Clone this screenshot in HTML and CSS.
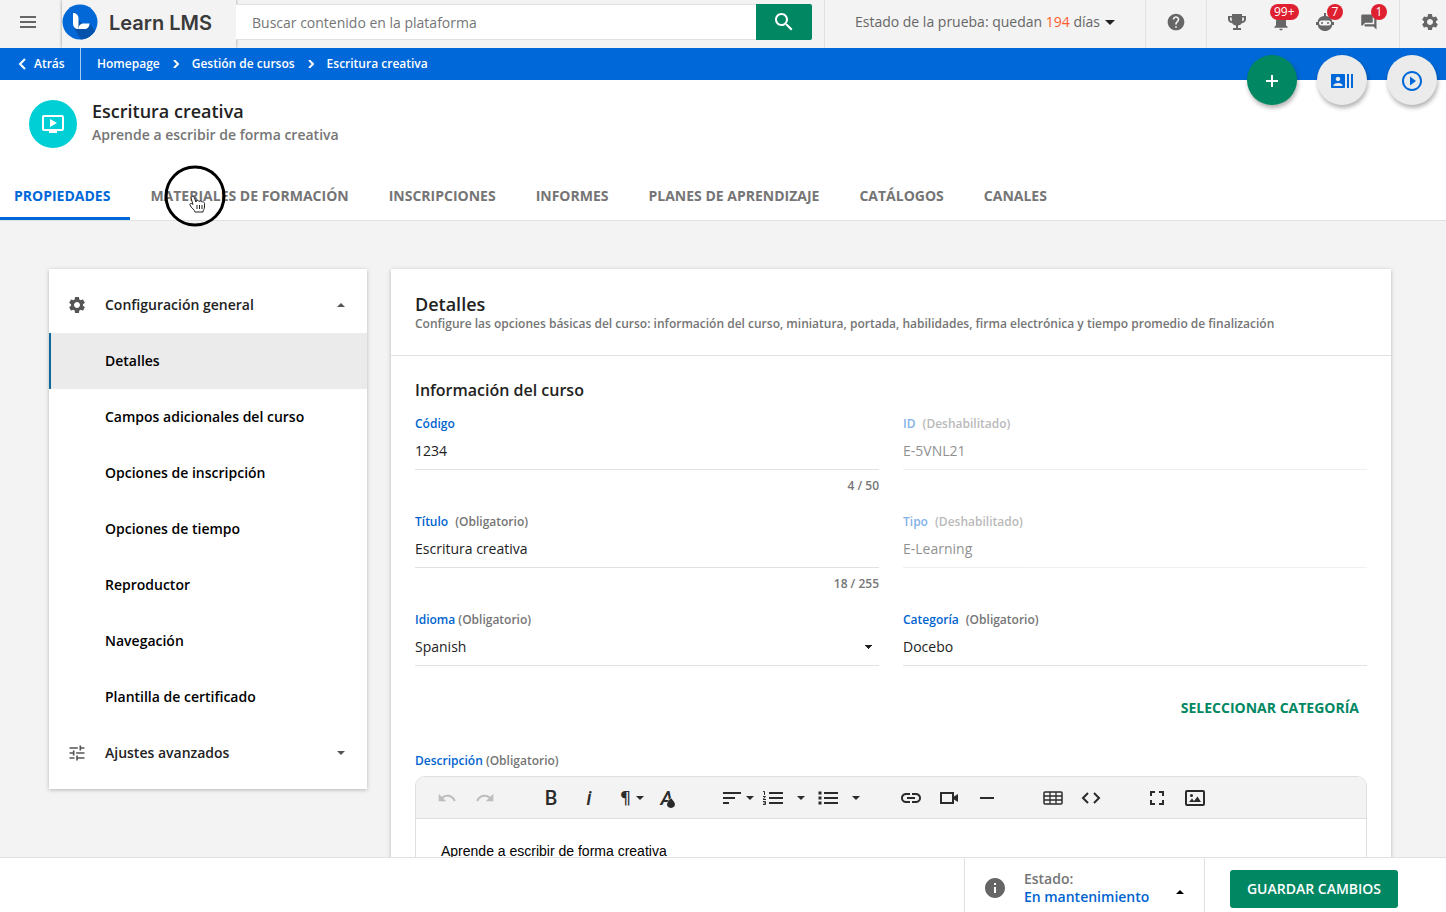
FILE: index.html
```html
<!DOCTYPE html>
<html lang="es">
<head>
  <meta charset="UTF-8">
  <meta name="viewport" content="width=device-width, initial-scale=1.0">
  <title>Escritura creativa - Learn LMS</title>
  <link rel="stylesheet" href="styles.css">
</head>
<body>
  <header class="topbar">
    <button class="menu-btn" aria-label="Menú">
      <svg width="18" height="12" viewBox="0 0 18 12"><path d="M1 1h16M1 6h16M1 11h16" stroke="#666" stroke-width="2"/></svg>
    </button>
    <a class="logo" href="#">
      <svg width="36" height="36" viewBox="0 0 36 36">
        <circle cx="18" cy="18" r="17.500" fill="#0268d8"/>
        <path d="M12 24l5-8 4 4h7l5 7a17.500 17.500 0 0 1-14 8.400z" fill="#0352ab"/>
        <path d="M11 9c3 0 5.500 2 5.500 5.500V25c-3.500 0-5.500-2-5.500-5.500z" fill="#fff"/>
        <path d="M16.500 25c0-3.500 2-5.500 5.500-5.500h5.500c0 3.500-2 5.500-5.500 5.500z" fill="#fff"/>
      </svg>
      <span>Learn LMS</span>
    </a>
    <form class="search">
      <input type="text" placeholder="Buscar contenido en la plataforma" aria-label="Buscar contenido en la plataforma">
      <button type="button" aria-label="Buscar">
        <svg width="24" height="24" viewBox="0 0 24 24"><path fill="#fff" d="M15.500 14h-.79l-.28-.27C15.410 12.590 16 11.110 16 9.500 16 5.910 13.090 3 9.500 3S3 5.910 3 9.500 5.910 16 9.500 16c1.610 0 3.090-.59 4.230-1.570l.27.28v.79l5 4.990L20.490 19l-4.990-5zm-6 0C7.010 14 5 11.990 5 9.500S7.010 5 9.500 5 14 7.010 14 9.500 11.990 14 9.500 14z"/></svg>
      </button>
    </form>
    <button class="trial">
      <span>Estado de la prueba: quedan <b>194</b> días</span>
      <svg width="10" height="5" viewBox="0 0 10 5"><path d="M0 0h10L5 5z" fill="#222"/></svg>
    </button>
    <button class="help" aria-label="Ayuda">
      <svg width="20" height="20" viewBox="0 0 24 24"><path d="M12 2C6.480 2 2 6.480 2 12s4.480 10 10 10 10-4.480 10-10S17.520 2 12 2zm1 17h-2v-2h2v2zm2.070-7.750l-.9.920C13.450 12.900 13 13.500 13 15h-2v-.5c0-1.100.45-2.100 1.170-2.830l1.240-1.260c.37-.36.59-.86.59-1.410 0-1.100-.9-2-2-2s-2 .9-2 2H8c0-2.210 1.790-4 4-4s4 1.790 4 4c0 .88-.36 1.680-.93 2.250z"/></svg>
    </button>
    <div class="top-icons">
      <button aria-label="Logros">
        <svg width="20" height="20" viewBox="0 0 20 20"><path fill-rule="evenodd" d="M5 2h10v2h4v3c0 2.500-1.800 4-4.300 4.200-.8 1.300-2 2.100-3.700 2.400V16h3v2H6v-2h3v-2.400c-1.700-.3-2.900-1.100-3.700-2.400C2.800 11 1 9.500 1 7V4h4zM3 5.500V7c0 1.200.6 2 1.700 2.400L4.800 5.500zm14 0h-1.800v3.900C16.400 9 17 8.200 17 7z"/></svg>
      </button>
      <button aria-label="Notificaciones">
        <svg width="20" height="20" viewBox="0 0 24 24"><path d="M12 22c1.100 0 2-.9 2-2h-4c0 1.100.89 2 2 2zm6-6v-5c0-3.070-1.640-5.640-4.500-6.320V4c0-.83-.67-1.500-1.500-1.500s-1.500.67-1.500 1.500v.68C7.630 5.360 6 7.920 6 11v5l-2 2v1h16v-1l-2-2z"/></svg>
        <span class="badge">99+</span>
      </button>
      <button aria-label="Asistente">
        <svg width="20" height="20" viewBox="0 0 20 20"><path d="M9 1h2v3c4 .4 6 3 6.300 6H19v3h-1.700c-.7 3.600-3.300 6-7.300 6s-6.600-2.400-7.300-6H1v-3h1.700C3 7 5 4.400 9 4z"/><rect x="4" y="8.500" width="12" height="5" rx="2.500" fill="#f3f3f3"/><rect x="6" y="10" width="2" height="2" rx="1"/><rect x="12" y="10" width="2" height="2" rx="1"/></svg>
        <span class="badge">7</span>
      </button>
      <button aria-label="Mensajes">
        <svg width="18" height="18" viewBox="0 0 24 24"><path d="M3 2h13c.55 0 1 .45 1 1v9c0 .55-.45 1-1 1H7l-4 4c-.55 0-1-.45-1-1V3c0-.55.45-1 1-1zm16 4h2c.55 0 1 .45 1 1v15l-4-4H7c-.55 0-1-.45-1-1v-2h13z"/><path d="M2 3v14l4-4V3z"/></svg>
        <span class="badge">1</span>
      </button>
    </div>
    <button class="settings" aria-label="Ajustes">
      <svg width="20" height="20" viewBox="0 0 24 24"><path d="M19.140 12.940c.04-.3.06-.61.06-.94 0-.32-.02-.64-.07-.94l2.030-1.580c.18-.14.23-.41.12-.61l-1.920-3.320c-.12-.22-.37-.29-.59-.22l-2.390.96c-.5-.38-1.030-.7-1.620-.94l-.36-2.540c-.04-.24-.24-.41-.48-.41h-3.840c-.24 0-.43.17-.47.41l-.36 2.540c-.59.24-1.130.57-1.620.94l-2.390-.96c-.22-.08-.47 0-.59.22L2.740 8.870c-.12.21-.08.47.12.61l2.030 1.580c-.05.3-.09.63-.09.94s.02.64.07.94l-2.030 1.580c-.18.14-.23.41-.12.61l1.920 3.320c.12.22.37.29.59.22l2.390-.96c.5.38 1.030.7 1.620.94l.36 2.540c.05.24.24.41.48.41h3.840c.24 0 .44-.17.47-.41l.36-2.540c.59-.24 1.130-.56 1.620-.94l2.390.96c.22.08.47 0 .59-.22l1.920-3.320c.12-.22.07-.47-.12-.61l-2.010-1.580zM12 15.600c-1.980 0-3.600-1.620-3.600-3.600s1.620-3.600 3.600-3.600 3.600 1.620 3.600 3.600-1.620 3.600-3.600 3.600z"/></svg>
    </button>
  </header>

  <nav class="breadcrumb" aria-label="Ruta">
    <a class="back" href="#">
      <svg width="8" height="12" viewBox="0 0 8 12"><path d="M7 1L2 6l5 5" fill="none" stroke="#fff" stroke-width="2"/></svg>
      Atrás
    </a>
    <a href="#">Homepage</a>
    <svg width="6" height="8" viewBox="0 0 6 8"><path d="M1 0l4 4-4 4" fill="none" stroke="#fff" stroke-width="2"/></svg>
    <a href="#">Gestión de cursos</a>
    <svg width="6" height="8" viewBox="0 0 6 8"><path d="M1 0l4 4-4 4" fill="none" stroke="#fff" stroke-width="2"/></svg>
    <a href="#">Escritura creativa</a>
  </nav>

  <!-- Floating buttons -->
  <div class="fabs">
    <button class="fab fab-add" aria-label="Añadir">
      <svg width="14" height="14" viewBox="0 0 14 14"><path d="M7 1v12M1 7h12" stroke="#fff" stroke-width="2"/></svg>
    </button>
    <button class="fab" aria-label="Usuarios">
      <svg width="24" height="24" viewBox="0 0 24 24"><path d="M21 5v14h2V5h-2zm-4 14h2V5h-2v14zM14 5H2c-.55 0-1 .45-1 1v12c0 .55.45 1 1 1h12c.55 0 1-.45 1-1V6c0-.55-.45-1-1-1zM8 7.750c1.240 0 2.250 1.010 2.250 2.250S9.240 12.250 8 12.250 5.750 11.240 5.750 10 6.760 7.750 8 7.750zM12.500 17h-9v-.75c0-1.500 3-2.250 4.500-2.250s4.500.75 4.500 2.250V17z"/></svg>
    </button>
    <button class="fab" aria-label="Reproducir">
      <svg width="24" height="24" viewBox="0 0 24 24"><path d="M10 16.500l6-4.500-6-4.500v9zM12 2C6.480 2 2 6.480 2 12s4.480 10 10 10 10-4.480 10-10S17.520 2 12 2zm0 18c-4.410 0-8-3.590-8-8s3.590-8 8-8 8 3.590 8 8-3.590 8-8 8z"/></svg>
    </button>
  </div>

  <div class="course-header">
    <div class="course-icon">
      <svg width="24" height="24" viewBox="0 0 24 24"><path fill="#fff" d="M21 3H3c-1.110 0-2 .89-2 2v12c0 1.100.89 2 2 2h5v2h8v-2h5c1.100 0 1.990-.9 1.990-2L23 5c0-1.110-.9-2-2-2zm0 14H3V5h18v12zm-5-6l-7 4V7z"/></svg>
    </div>
    <div>
      <h1>Escritura creativa</h1>
      <p>Aprende a escribir de forma creativa</p>
    </div>
  </div>

  <nav class="tabs" aria-label="Secciones del curso">
    <a class="tab active" href="#">PROPIEDADES</a>
    <a class="tab" href="#">MATERIALES DE FORMACIÓN</a>
    <a class="tab" href="#">INSCRIPCIONES</a>
    <a class="tab" href="#">INFORMES</a>
    <a class="tab" href="#">PLANES DE APRENDIZAJE</a>
    <a class="tab" href="#">CATÁLOGOS</a>
    <a class="tab" href="#">CANALES</a>
  </nav>

  <main class="content">
    <aside class="sidebar">
      <button class="side-group">
        <svg class="side-icon" width="20" height="20" viewBox="0 0 24 24"><path d="M19.140 12.940c.04-.3.06-.61.06-.94 0-.32-.02-.64-.07-.94l2.030-1.580c.18-.14.23-.41.12-.61l-1.920-3.320c-.12-.22-.37-.29-.59-.22l-2.390.96c-.5-.38-1.030-.7-1.620-.94l-.36-2.540c-.04-.24-.24-.41-.48-.41h-3.840c-.24 0-.43.17-.47.41l-.36 2.540c-.59.24-1.130.57-1.620.94l-2.390-.96c-.22-.08-.47 0-.59.22L2.740 8.870c-.12.21-.08.47.12.61l2.030 1.580c-.05.3-.09.63-.09.94s.02.64.07.94l-2.030 1.580c-.18.14-.23.41-.12.61l1.920 3.320c.12.22.37.29.59.22l2.390-.96c.5.38 1.030.7 1.620.94l.36 2.540c.05.24.24.41.48.41h3.840c.24 0 .44-.17.47-.41l.36-2.540c.59-.24 1.130-.56 1.620-.94l2.390.96c.22.08.47 0 .59-.22l1.920-3.320c.12-.22.07-.47-.12-.61l-2.010-1.580zM12 15.600c-1.980 0-3.600-1.620-3.600-3.600s1.620-3.600 3.600-3.600 3.600 1.620 3.600 3.600-1.620 3.600-3.600 3.600z"/></svg>
        <span>Configuración general</span>
        <svg width="8" height="4" viewBox="0 0 8 4"><path d="M0 4l4-4 4 4z"/></svg>
      </button>
      <a class="side-item active" href="#">Detalles</a>
      <a class="side-item" href="#">Campos adicionales del curso</a>
      <a class="side-item" href="#">Opciones de inscripción</a>
      <a class="side-item" href="#">Opciones de tiempo</a>
      <a class="side-item" href="#">Reproductor</a>
      <a class="side-item" href="#">Navegación</a>
      <a class="side-item" href="#">Plantilla de certificado</a>
      <button class="side-group">
        <svg class="side-icon" width="20" height="20" viewBox="0 0 24 24"><path d="M3 17v2h6v-2H3zM3 5v2h10V5H3zm10 16v-2h8v-2h-8v-2h-2v6h2zM7 9v2H3v2h4v2h2V9H7zm14 4v-2H11v2h10zm-6-4h2V7h4V5h-4V3h-2v6z"/></svg>
        <span>Ajustes avanzados</span>
        <svg width="8" height="4" viewBox="0 0 8 4"><path d="M0 0h8L4 4z"/></svg>
      </button>
    </aside>

    <section class="panel">
      <div class="panel-header">
        <h2>Detalles</h2>
        <p>Configure las opciones básicas del curso: información del curso, miniatura, portada, habilidades, firma electrónica y tiempo promedio de finalización</p>
      </div>
      <form class="panel-body">
        <h3>Información del curso</h3>
        <div class="fields">
          <div class="field">
            <label for="code">Código</label>
            <input id="code" type="text" value="1234">
            <span class="counter">4 / 50</span>
          </div>
          <div class="field disabled">
            <label for="course-id">ID <span class="wide">(Deshabilitado)</span></label>
            <input id="course-id" type="text" value="E-5VNL21" disabled>
          </div>
          <div class="field">
            <label for="title">Título <span class="wide">(Obligatorio)</span></label>
            <input id="title" type="text" value="Escritura creativa">
            <span class="counter">18 / 255</span>
          </div>
          <div class="field disabled">
            <label for="type">Tipo <span class="wide">(Deshabilitado)</span></label>
            <input id="type" type="text" value="E-Learning" disabled>
          </div>
          <div class="field">
            <label for="lang">Idioma <span>(Obligatorio)</span></label>
            <select id="lang"><option>Spanish</option></select>
          </div>
          <div class="field">
            <label for="category">Categoría <span class="wide">(Obligatorio)</span></label>
            <input id="category" type="text" value="Docebo">
            <button type="button" class="text-btn">SELECCIONAR CATEGORÍA</button>
          </div>
        </div>

        <div class="field description">
          <label for="description">Descripción <span>(Obligatorio)</span></label>
          <div class="editor">
            <div class="toolbar">
              <div class="tool-group">
                <button type="button" aria-label="Deshacer" disabled><svg width="20" height="20" viewBox="0 0 24 24"><path d="M12.500 8c-2.650 0-5.050.99-6.900 2.600L2 7v9h9l-3.620-3.620c1.390-1.160 3.160-1.880 5.120-1.880 3.540 0 6.550 2.310 7.600 5.500l2.370-.78C21.080 11.030 17.150 8 12.500 8z"/></svg></button>
                <button type="button" aria-label="Rehacer" disabled><svg width="20" height="20" viewBox="0 0 24 24"><path transform="matrix(-1 0 0 1 24 0)" d="M12.500 8c-2.650 0-5.050.99-6.900 2.600L2 7v9h9l-3.620-3.620c1.390-1.160 3.160-1.880 5.120-1.880 3.540 0 6.550 2.310 7.600 5.500l2.370-.78C21.080 11.030 17.150 8 12.500 8z"/></svg></button>
              </div>
              <div class="tool-group">
                <button type="button" class="glyph" aria-label="Negrita">B</button>
                <button type="button" class="glyph italic" aria-label="Cursiva">i</button>
                <button type="button" class="glyph with-caret pilcrow" aria-label="Formato de párrafo">¶<svg width="8" height="4" viewBox="0 0 8 4"><path d="M0 0h8L4 4z"/></svg></button>
                <button type="button" class="glyph color" aria-label="Color de texto">A<svg class="drop" width="8" height="10" viewBox="0 0 8 10"><path d="M4 0l2.800 3.600c2.500 3.200.5 6.400-2.800 6.400S-1.300 6.800 1.200 3.600z" stroke="#f3f3f3" stroke-width="1" paint-order="stroke"/></svg></button>
              </div>
              <div class="tool-group">
                <button type="button" class="with-caret" aria-label="Alinear"><svg width="18" height="14" viewBox="0 0 18 14"><path d="M0 2h18M0 7h12M0 12h6" stroke="#2b2b2b" stroke-width="2"/></svg><svg width="8" height="4" viewBox="0 0 8 4"><path d="M0 0h8L4 4z"/></svg></button>
                <button type="button" aria-label="Lista numerada"><svg width="20" height="16" viewBox="0 0 20 16"><path d="M6 3h14M6 8h14M6 13h14" stroke="#2b2b2b" stroke-width="2"/><path d="M0 1.500h1.500V5M0 6.500h2.500L0 9.500h3M0 11.500h2.500v3H0M.5 13h2" fill="none" stroke="#2b2b2b" stroke-width="1"/></svg></button>
                <button type="button" class="split" aria-label="Opciones de lista numerada"><svg width="8" height="4" viewBox="0 0 8 4"><path d="M0 0h8L4 4z"/></svg></button>
                <button type="button" aria-label="Lista con viñetas"><svg width="20" height="16" viewBox="0 0 20 16"><path d="M6 3h14M6 8h14M6 13h14" stroke="#2b2b2b" stroke-width="2"/><path d="M.5 3h3M.5 8h3M.5 13h3" stroke="#2b2b2b" stroke-width="3"/></svg></button>
                <button type="button" class="split" aria-label="Opciones de viñetas"><svg width="8" height="4" viewBox="0 0 8 4"><path d="M0 0h8L4 4z"/></svg></button>
              </div>
              <div class="tool-group">
                <button type="button" aria-label="Insertar enlace"><svg width="24" height="24" viewBox="0 0 24 24"><path d="M3.900 12c0-1.710 1.390-3.100 3.100-3.100h4V7H7c-2.760 0-5 2.240-5 5s2.240 5 5 5h4v-1.900H7c-1.710 0-3.100-1.390-3.100-3.100zM8 13h8v-2H8v2zm9-6h-4v1.900h4c1.710 0 3.100 1.390 3.100 3.100s-1.390 3.100-3.100 3.100h-4V17h4c2.760 0 5-2.240 5-5s-2.240-5-5-5z"/></svg></button>
                <button type="button" aria-label="Insertar vídeo"><svg width="20" height="14" viewBox="0 0 20 14"><rect x="2" y="2" width="12" height="10" fill="none" stroke="#2b2b2b" stroke-width="2"/><path d="M15 5.500L19 3v8l-4-2.500z"/></svg></button>
                <button type="button" aria-label="Línea horizontal"><svg width="14" height="2" viewBox="0 0 14 2"><path d="M0 0h14v2H0z"/></svg></button>
              </div>
              <div class="tool-group">
                <button type="button" aria-label="Insertar tabla"><svg width="20" height="14" viewBox="0 0 20 14"><rect x="1" y="1" width="18" height="12" rx="1" fill="none" stroke="#2b2b2b" stroke-width="1.500"/><path d="M1 5h18M1 9h18M7 1v12M13 1v12" stroke="#2b2b2b" stroke-width="1.300"/></svg></button>
                <button type="button" aria-label="Vista de código"><svg width="20" height="12" viewBox="0 0 20 12"><path d="M7 1L2 6l5 5M13 1l5 5-5 5" fill="none" stroke="#2b2b2b" stroke-width="2"/></svg></button>
              </div>
              <div class="tool-group">
                <button type="button" aria-label="Pantalla completa"><svg width="14" height="14" viewBox="0 0 14 14"><path d="M1 5V1h4M9 1h4v4M13 9v4H9M5 13H1V9" fill="none" stroke="#2b2b2b" stroke-width="2"/></svg></button>
                <button type="button" aria-label="Insertar imagen"><svg width="20" height="16" viewBox="0 0 20 16"><rect x="1" y="1" width="18" height="14" rx="1" fill="none" stroke="#2b2b2b" stroke-width="2"/><path d="M4 12l3-3.500L9 11l3.500-4.500L16 12z"/><circle cx="6.500" cy="5.500" r="1.500"/></svg></button>
              </div>
            </div>
            <textarea id="description" rows="6">Aprende a escribir de forma creativa</textarea>
          </div>
        </div>
      </form>
    </section>
  </main>

  <footer class="footer">
    <button class="status">
      <svg width="24" height="24" viewBox="0 0 24 24"><path fill="#666" d="M12 2C6.480 2 2 6.480 2 12s4.480 10 10 10 10-4.480 10-10S17.520 2 12 2zm1 15h-2v-6h2v6zm0-8h-2V7h2v2z"/></svg>
      <span class="status-text">Estado:<strong>En mantenimiento</strong></span>
      <svg class="status-caret" width="8" height="4" viewBox="0 0 8 4"><path d="M0 4l4-4 4 4z"/></svg>
    </button>
    <button class="save">GUARDAR CAMBIOS</button>
  </footer>

  <!-- Pointer highlight -->
  <svg class="pointer" width="62" height="62" viewBox="0 0 62 62">
    <circle cx="31" cy="31" r="29" fill="none" stroke="#000" stroke-width="3"/>
    <path d="M27 33c0-2 3-2 3.500 0l1.500 4v-1c1-1 2.500-.5 3 .5 1-1 2.500-.5 3 .5 1-.5 2.500 0 2.500 1.500V42c0 2-1.500 3-1.500 5h-8c0-2-4-4-5-7-.5-2 1.500-2 3-.5z" fill="#fff" stroke="#222" stroke-width="1"/>
    <path d="M33 40v4M35.500 40v4M38 40v4" stroke="#222" stroke-width="1"/>
  </svg>
</body>
</html>
```

FILE: styles.css
```css
* {
  box-sizing: border-box;
}
body {
  margin: 0;
  height: 100vh;
  display: flex;
  flex-direction: column;
  overflow: hidden;
  position: relative;
  background: #f3f3f3;
  color: #222;
  font-family: "Open Sans", sans-serif;
  font-size: 14px;
  line-height: 20px;
}
h1, h2, h3, p {
  margin: 0;
  font-weight: 600;
}
a {
  color: inherit;
  text-decoration: none;
}
button {
  border: none;
  background: none;
  padding: 0;
  color: inherit;
  font: inherit;
  cursor: pointer;
}
svg {
  display: block;
  flex: none;
}

/* Top bar */
.topbar {
  display: flex;
  flex: none;
  height: 48px;
  color: #666;
  fill: #666;
}
.topbar > button, .top-icons button {
  display: flex;
  align-items: center;
  justify-content: center;
  padding-bottom: 4px;
}
.menu-btn {
  width: 56px;
  margin-right: 6px;
}
.logo {
  display: flex;
  align-items: center;
  gap: 11px;
  width: 174px;
  padding-bottom: 4px;
  color: #3a3a3a;
  font-family: Inter, sans-serif;
  font-size: 20px;
  font-weight: 600;
  line-height: 24px;
  white-space: nowrap;
  box-shadow: 0 0 3px rgba(0, 0, 0, 0.4);
}
.logo span {
  padding-top: 2px;
}
.search {
  display: flex;
  flex: 1;
  height: 36px;
  margin: 4px 12px 0 0;
}
.search input {
  flex: 1;
  min-width: 0;
  padding: 2px 16px 0;
  border: 1px solid #e1e1e1;
  border-width: 1px 0;
  background: #fff;
  font: inherit;
}
.search input::placeholder {
  color: #757575;
}
.search button {
  display: flex;
  align-items: center;
  justify-content: center;
  width: 56px;
  border-radius: 0 2px 2px 0;
  background: #028763;
}
.trial, .help, .settings {
  border-left: 1px solid #e1e1e1;
}
.trial {
  gap: 5px;
  padding: 0 30px;
}
.trial b {
  color: #ff5d2e;
  font-weight: 400;
}
.trial svg {
  fill: #222;
}
.help {
  width: 61px;
}
.top-icons {
  display: flex;
  padding: 0 8px;
  border-left: 1px solid #e1e1e1;
}
.top-icons button {
  position: relative;
  width: 44px;
}
.badge {
  position: absolute;
  top: 4px;
  left: 24px;
  min-width: 16px;
  height: 16px;
  padding: 0 4px;
  border-radius: 8px;
  background: #df2030;
  color: #fff;
  font-size: 12px;
  line-height: 16px;
}
.top-icons button:nth-child(2) .badge {
  left: 11px;
}
.settings {
  width: 47px;
  padding-left: 14px;
}

/* Breadcrumb */
.breadcrumb {
  display: flex;
  flex: none;
  align-items: center;
  gap: 13px;
  height: 32px;
  background: #0068d8;
  color: #fff;
  font-size: 12px;
  font-weight: 600;
}
.back {
  display: flex;
  align-items: center;
  gap: 8px;
  width: 81px;
  height: 32px;
  padding-left: 18px;
  margin-right: 3px;
  border-right: 1px solid #a8cbf2;
}

/* Floating buttons */
.fabs {
  position: absolute;
  top: 55px;
  right: 9px;
  display: flex;
  gap: 20px;
}
.fab {
  display: flex;
  align-items: center;
  justify-content: center;
  width: 50px;
  height: 50px;
  padding-top: 2px;
  border-radius: 50%;
  background: #ebebeb;
  fill: #0068d8;
  box-shadow: 1px 3px 4px rgba(0, 0, 0, 0.3);
}
.fab-add {
  background: #028763;
}

/* Course header and tabs */
.course-header {
  display: flex;
  flex: none;
  gap: 15px;
  padding: 20px 29px 24px;
  background: #fff;
}
.course-icon {
  display: flex;
  align-items: center;
  justify-content: center;
  width: 48px;
  height: 48px;
  border-radius: 50%;
  background: #00cfd6;
}
.course-header h1 {
  font-size: 18px;
  line-height: 22px;
}
.course-header p {
  color: #757575;
  line-height: 26px;
}
.tabs {
  display: flex;
  flex: none;
  height: 49px;
  background: #fff;
  border-bottom: 1px solid #e1e1e1;
}
.tab {
  padding: 0 20px;
  border-bottom: 3px solid transparent;
  color: #757575;
  font-weight: 700;
  line-height: 48px;
  white-space: nowrap;
}
.tab.active {
  padding-left: 14px;
  border-color: #0068d8;
  color: #0068d8;
}

/* Content */
.content {
  display: flex;
  flex: 1;
  align-items: flex-start;
  gap: 24px;
  min-height: 0;
  padding: 48px 55px 0 49px;
  overflow: hidden;
}
.sidebar, .panel {
  background: #fff;
  box-shadow: 0 1px 4px rgba(0, 0, 0, 0.25);
}
.sidebar {
  flex: none;
  width: 318px;
  padding: 8px 0;
}
.side-group {
  display: flex;
  align-items: center;
  width: 100%;
  height: 56px;
  padding: 0 22px 0 18px;
  fill: #555;
  font-weight: 600;
  text-align: left;
}
.side-group span {
  flex: 1;
  padding-left: 18px;
}
.side-item {
  display: block;
  padding-left: 56px;
  color: #000;
  font-weight: 600;
  line-height: 56px;
}
.side-item.active {
  padding-left: 54px;
  border-left: 2px solid #106b9c;
  background: #ebebeb;
}
.panel {
  flex: 1;
  min-width: 0;
}
.panel-header {
  padding: 23px 24px;
  border-bottom: 1px solid #e1e1e1;
}
.panel-header h2 {
  font-size: 18px;
  line-height: 24px;
}
.panel-header p {
  color: #757575;
  font-size: 12px;
  line-height: 16px;
}
.panel-body {
  padding: 22px 24px 24px;
}
.panel-body h3 {
  margin-bottom: 14px;
  font-size: 16px;
  line-height: 24px;
}

/* Form fields */
.fields {
  display: grid;
  grid-template-columns: 1fr 1fr;
  column-gap: 24px;
}
.field {
  display: flex;
  flex-direction: column;
  min-height: 98px;
}
.field label {
  color: #0064cf;
  font-size: 12px;
  font-weight: 600;
  line-height: 16px;
}
.field label span {
  color: #757575;
}
.field label .wide {
  margin-left: 4px;
}
.field input, .field select {
  appearance: none;
  width: 100%;
  height: 38px;
  padding: 0;
  border: none;
  border-bottom: 1px solid #e1e1e1;
  border-radius: 0;
  background: none;
  color: #222;
  font: inherit;
}
.field select {
  background: linear-gradient(to bottom right, #222 50%, transparent 50%) no-repeat right 6px center / 4px 4px,
    linear-gradient(to bottom left, #222 50%, transparent 50%) no-repeat right 10px center / 4px 4px;
}
.field.disabled label, .field.disabled input {
  opacity: 0.5;
}
.counter {
  padding-top: 8px;
  color: #757575;
  font-size: 12px;
  font-weight: 600;
  line-height: 16px;
  text-align: right;
}
.text-btn {
  align-self: flex-end;
  height: 36px;
  margin-top: 24px;
  padding: 0 8px;
  color: #028763;
  font-weight: 700;
}
.description {
  padding-top: 27px;
}

/* Editor */
.editor {
  margin-top: 7px;
  border: 1px solid #dfdfdf;
  border-radius: 10px;
  overflow: hidden;
}
.toolbar {
  display: flex;
  flex-wrap: wrap;
  column-gap: 28px;
  padding: 0 12px;
  background: #f3f3f3;
  border-bottom: 1px solid #dfdfdf;
  fill: #2b2b2b;
}
.tool-group {
  display: flex;
}
.tool-group button {
  display: flex;
  align-items: center;
  justify-content: center;
  width: 38px;
  height: 41px;
}
.tool-group button:disabled {
  fill: #bdbdbd;
}
.tool-group .with-caret {
  gap: 5px;
  width: 40px;
  padding-left: 8px;
}
.tool-group .split {
  width: 17px;
}
.tool-group .glyph {
  color: #2b2b2b;
  font-family: Roboto, sans-serif;
  font-size: 20px;
  font-weight: 500;
}
.tool-group .italic {
  font-style: italic;
}
.tool-group .pilcrow {
  font-family: "DejaVu Sans", sans-serif;
  font-size: 18px;
}
.tool-group .color {
  position: relative;
  font-style: italic;
}
.drop {
  position: absolute;
  left: 19px;
  top: 21px;
  overflow: visible;
}
.editor textarea {
  display: block;
  width: 100%;
  padding: 23px 25px;
  border: none;
  resize: none;
  color: #000;
  font-family: "Liberation Sans", Arial, sans-serif;
  font-size: 14px;
  line-height: 18px;
}

/* Footer */
.footer {
  display: flex;
  flex: none;
  justify-content: flex-end;
  gap: 25px;
  height: 55px;
  padding-right: 48px;
  background: #fff;
  border-top: 1px solid #e1e1e1;
}
.status {
  display: flex;
  width: 241px;
  padding: 12px 20px 0 18px;
  border-left: 1px solid #e1e1e1;
  border-right: 1px solid #e1e1e1;
  color: #757575;
  font-weight: 600;
  line-height: 18px;
  text-align: left;
}
.status > svg:first-child {
  margin-top: 6px;
}
.status-text {
  flex: 1;
  padding-left: 17px;
}
.status strong {
  display: block;
  color: #0064cf;
  font-weight: 600;
}
.status-caret {
  margin-top: 20px;
}
.save {
  height: 38px;
  margin-top: 12px;
  padding: 0 17px;
  border-radius: 3px;
  background: #028763;
  color: #fff;
  font-weight: 600;
}

.pointer {
  position: absolute;
  left: 164px;
  top: 165px;
  pointer-events: none;
}
```
